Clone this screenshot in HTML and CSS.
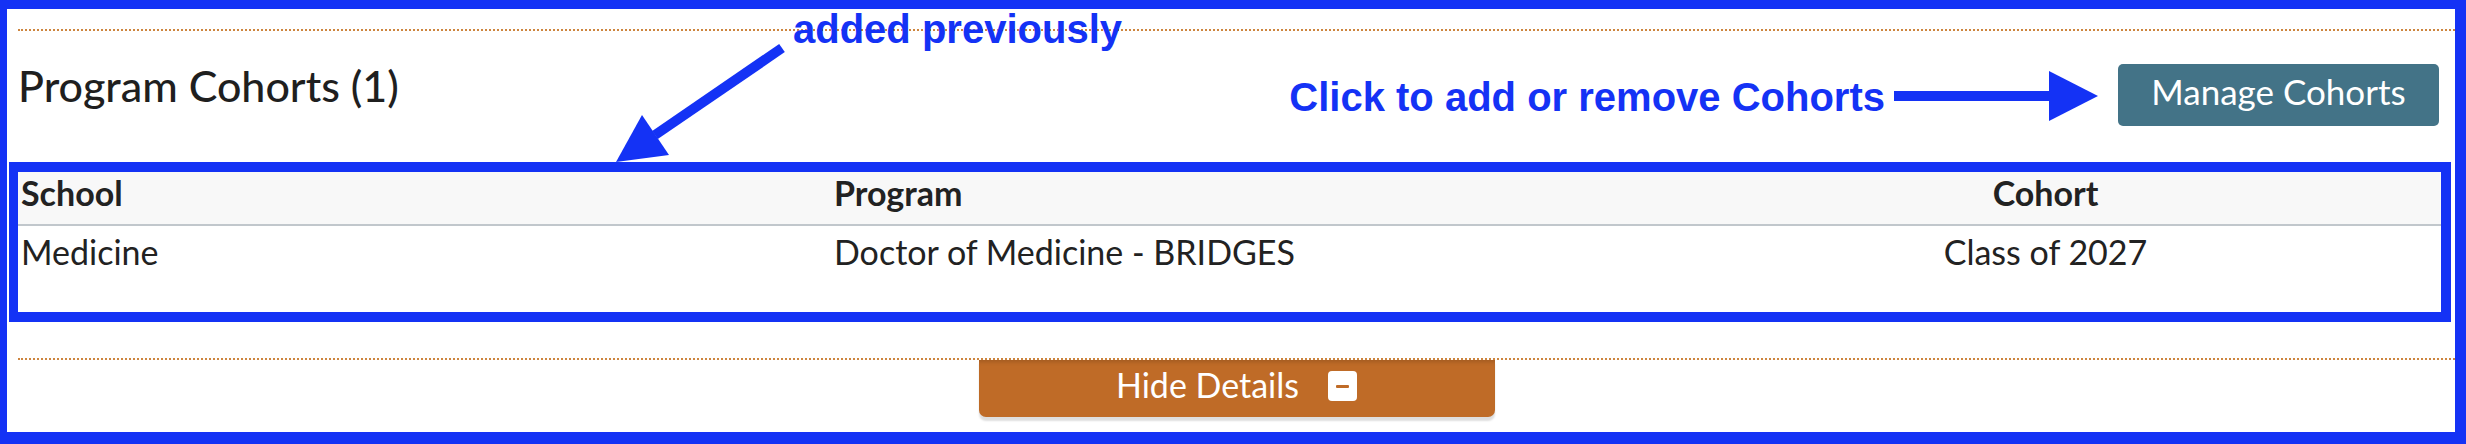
FILE: index.html
```html
<!DOCTYPE html>
<html lang="en">
<head>
<meta charset="utf-8">
<title>Program Cohorts</title>
<link rel="stylesheet" href="styles.css">
</head>
<body>
<div class="frame">
  <div class="rule"></div>
  <div class="head-row">
    <h2 class="title">Program Cohorts (1)</h2>
    <div class="note note-inline">Click to add or remove Cohorts</div>
    <svg class="arrow-right" width="204" height="50" viewBox="0 0 204 50" aria-hidden="true">
      <rect x="0" y="20" width="156" height="10"/>
      <polygon points="155,0 204,25 155,50"/>
    </svg>
    <button class="btn-manage" type="button">Manage Cohorts</button>
  </div>
  <div class="highlight">
    <table class="cohorts">
      <colgroup><col class="col-school"><col class="col-program"><col></colgroup>
      <thead>
        <tr><th>School</th><th>Program</th><th class="c-cohort">Cohort</th></tr>
      </thead>
      <tbody>
        <tr><td>Medicine</td><td>Doctor of Medicine - BRIDGES</td><td class="c-cohort">Class of 2027</td></tr>
      </tbody>
    </table>
  </div>
  <div class="rule rule-bottom"></div>
  <div class="toggle-row">
    <button class="btn-toggle" type="button"><span>Hide Details</span><span class="minus"></span></button>
  </div>
</div>
<div class="note note-float">added previously</div>
<svg class="overlay" width="2466" height="444" viewBox="0 0 2466 444" aria-hidden="true">
  <line x1="655" y1="135" x2="782" y2="48" class="shaft"/>
  <polygon points="616,162 642,115 669,155" class="head"/>
</svg>
</body>
</html>
```

FILE: styles.css
```css
html, body {
  margin: 0;
  padding: 0;
}

body {
  position: relative;
  width: 2466px;
  height: 444px;
  overflow: hidden;
  background: #ffffff;
  color: #222222;
  font-family: Lato, "Open Sans", "DejaVu Sans", sans-serif;
}

.frame {
  box-sizing: border-box;
  height: 444px;
  border-style: solid;
  border-color: #1432f5;
  border-width: 9px 11px 12px 7px;
  padding-left: 11px;
}

.rule {
  border-top: 2px dotted #cd853f;
  margin-top: 20px;
}

.head-row {
  display: flex;
  align-items: flex-start;
  margin-top: 32px;
  height: 99px;
  padding-right: 16px;
}

.title {
  margin: -3px 0 0;
  font-size: 43px;
  line-height: 52px;
  font-weight: 500;
  color: #1f1f1f;
}

.note {
  font-family: "Liberation Sans", Arial, sans-serif;
  font-weight: 700;
  font-size: 40px;
  line-height: 46px;
  color: #1432f5;
  white-space: nowrap;
}

.note-inline {
  margin-left: auto;
  margin-top: 11px;
}

.arrow-right {
  display: block;
  margin-left: 9px;
  margin-top: 8px;
  fill: #1432f5;
}

.btn-manage {
  box-sizing: border-box;
  margin-left: 20px;
  margin-top: 1px;
  width: 321px;
  height: 62px;
  padding: 0 0 8px;
  border: 0;
  border-radius: 5px;
  background: #437387;
  color: #ffffff;
  font-family: Lato, "Open Sans", sans-serif;
  font-size: 35px;
  line-height: 42px;
}

.highlight {
  margin-left: -9px;
  margin-right: 4px;
  border: 10px solid #1432f5;
  border-left-width: 9px;
}

.cohorts {
  width: 100%;
  border-collapse: collapse;
  table-layout: fixed;
  font-size: 34px;
}

.col-school {
  width: 813px;
}

.col-program {
  width: 819px;
}

.cohorts th {
  background: #f8f8f8;
  text-align: left;
  font-weight: 700;
  line-height: 41px;
  padding: 0 3px 11px;
  border-bottom: 2px solid #c1c7cc;
}

.cohorts td {
  line-height: 41px;
  padding: 5px 3px 40px;
  vertical-align: top;
}

.cohorts .c-cohort {
  text-align: center;
}

.rule-bottom {
  margin-top: 36px;
}

.toggle-row {
  display: flex;
  justify-content: center;
}

.btn-toggle {
  box-sizing: border-box;
  display: flex;
  align-items: center;
  justify-content: center;
  gap: 29px;
  width: 516px;
  height: 57px;
  padding: 0 0 8px;
  border: 0;
  border-radius: 0 0 7px 7px;
  background: #bf6b27;
  color: #ffffff;
  font-family: Lato, "Open Sans", sans-serif;
  font-size: 34px;
  line-height: 41px;
  box-shadow: 0 4px 2px rgba(0, 0, 0, 0.13), inset 0 5px 4px -3px rgba(0, 0, 0, 0.15);
}

.minus {
  display: flex;
  align-items: center;
  justify-content: center;
  width: 29px;
  height: 30px;
  margin-top: 3px;
  border-radius: 4px;
  background: #ffffff;
}

.minus::after {
  content: "";
  width: 13px;
  height: 3px;
  border-radius: 1px;
  background: #bf6b27;
}

.note-float {
  position: absolute;
  left: 793px;
  top: 6px;
}

.overlay {
  position: absolute;
  left: 0;
  top: 0;
  pointer-events: none;
}

.overlay .shaft {
  stroke: #1432f5;
  stroke-width: 10;
}

.overlay .head {
  fill: #1432f5;
}
```
